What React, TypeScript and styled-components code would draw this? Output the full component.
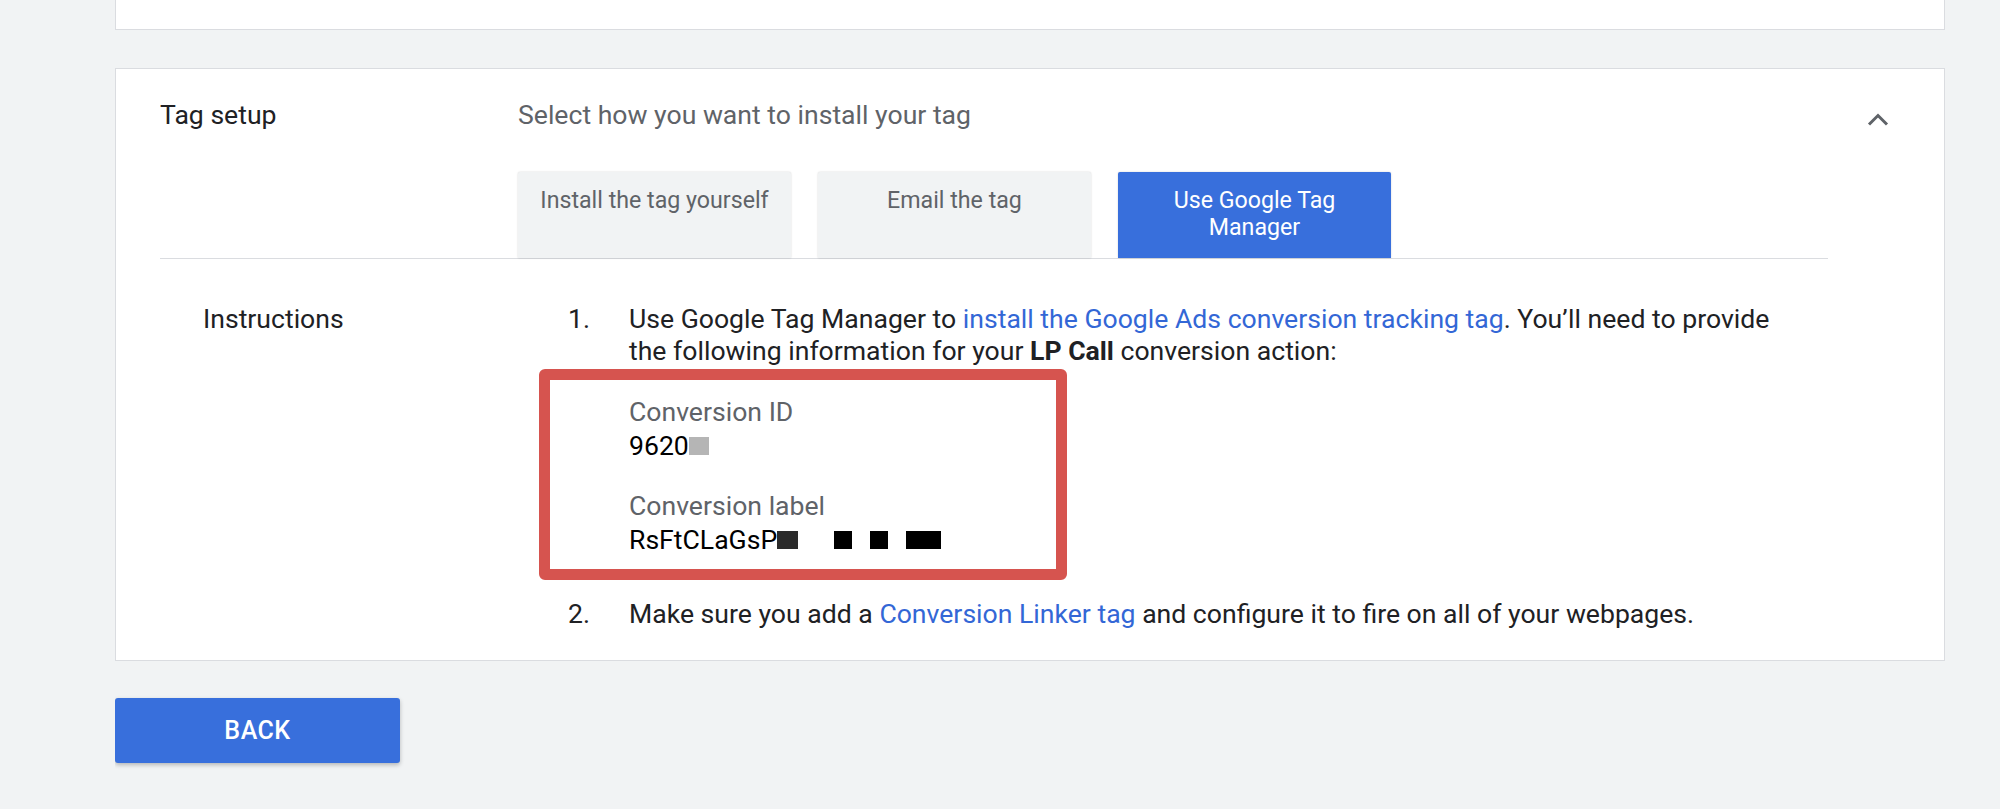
import { FC } from 'react';
import styled, { createGlobalStyle } from 'styled-components';

const GlobalStyle = createGlobalStyle`
  html, body {
    margin: 0;
    padding: 0;
    background: #f1f3f4;
    font-family: Roboto, 'Liberation Sans', Arial, sans-serif;
    color: #202124;
  }
`;

const Page = styled.div`
  width: 1830px;
  margin-left: 115px;
  height: 809px;
  overflow: hidden;
`;

const TopCard = styled.div`
  height: 30px;
  margin-top: -1px;
  background: #fff;
  border: 1px solid #dadce0;
  border-top: none;
`;

const Card = styled.section`
  display: flex;
  margin-top: 38px;
  background: #fff;
  border: 1px solid #dadce0;
  padding: 0 55px 30px 44px;
`;

const Main = styled.div`
  flex: 1;
`;

const ChevronCol = styled.div`
  width: 61px;
  display: flex;
  justify-content: flex-end;
  padding-top: 43px;
`;

const Header = styled.div`
  display: grid;
  grid-template-columns: 358px 1fr;
  padding-top: 30px;
  border-bottom: 1px solid #dadce0;
`;

const SectionTitle = styled.div`
  font-size: 26.6px;
  line-height: 32px;
  color: #202124;
`;

const Prompt = styled.div`
  font-size: 26.6px;
  line-height: 32px;
  color: #5f6368;
`;

const Tabs = styled.div`
  display: flex;
  gap: 27px;
  margin-top: 41px;
`;

const Tab = styled.button<{ $active?: boolean }>`
  width: 273px;
  height: 86px;
  box-sizing: border-box;
  padding: 15px 20px 0;
  border: none;
  border-radius: 2px 2px 0 0;
  background: ${({ $active }) => ($active ? '#386fdc' : '#f1f3f4')};
  color: ${({ $active }) => ($active ? '#fff' : '#5f6368')};
  box-shadow: 0 0 2px rgba(0, 0, 0, 0.18);
  font-family: inherit;
  font-size: 23.2px;
  line-height: 27px;
  text-align: center;
  display: flex;
  justify-content: center;
  align-items: flex-start;
  cursor: pointer;
`;

const Instructions = styled.div`
  display: grid;
  grid-template-columns: 358px 1fr;
  padding-top: 44px;
`;

const SubTitle = styled(SectionTitle)`
  padding-left: 43px;
`;

const Steps = styled.ol`
  list-style: none;
  margin: 0;
  padding: 0 0 0 50px;
`;

const Step = styled.li`
  display: flex;
  font-size: 26.6px;
  line-height: 32px;
  & + & {
    margin-top: 18px;
  }
`;

const StepNum = styled.span`
  width: 61px;
  flex: none;
`;

const StepBody = styled.div`
  max-width: 1175px;
`;

const Link = styled.a`
  color: #3367d6;
  text-decoration: none;
  cursor: pointer;
`;

const Highlight = styled.div`
  width: 427px;
  margin: 2px 0 0 -90px;
  border: 11px solid #d6544f;
  border-radius: 6px;
  padding: 16px 0 13px 79px;
`;

const FieldLabel = styled.div<{ $first?: boolean }>`
  color: #5f6368;
  margin-top: ${({ $first }) => ($first ? 0 : 28)}px;
`;

const FieldValue = styled.div`
  margin-top: 2px;
  display: flex;
  align-items: center;
  color: #000;
`;

const Redact = styled.span<{ $w: number; $color: string; $gap?: number }>`
  display: inline-block;
  width: ${({ $w }) => $w}px;
  height: 18px;
  margin-left: ${({ $gap }) => $gap ?? 0}px;
  background: ${({ $color }) => $color};
`;

const BackButton = styled.button`
  margin-top: 37px;
  width: 285px;
  height: 65px;
  border: none;
  border-radius: 3px;
  background: #386fdc;
  color: #fff;
  font-family: inherit;
  font-size: 25px;
  font-weight: 500;
  letter-spacing: 0.5px;
  box-shadow: 0 2px 4px rgba(0, 0, 0, 0.25);
  cursor: pointer;
`;

const ChevronUp: FC = () => (
  <svg width="22" height="14" viewBox="0 0 22 14" fill="none">
    <path d="M2 12.5 L11 3.5 L20 12.5" stroke="#5f6368" strokeWidth="3" />
  </svg>
);

const App: FC = () => (
  <>
    <GlobalStyle />
    <Page>
      <TopCard />
      <Card>
        <Main>
          <Header>
            <SectionTitle>Tag setup</SectionTitle>
            <div>
              <Prompt>Select how you want to install your tag</Prompt>
              <Tabs>
                <Tab>Install the tag yourself</Tab>
                <Tab>Email the tag</Tab>
                <Tab $active>Use Google Tag Manager</Tab>
              </Tabs>
            </div>
          </Header>
          <Instructions>
            <SubTitle>Instructions</SubTitle>
            <Steps>
              <Step>
                <StepNum>1.</StepNum>
                <StepBody>
                  Use Google Tag Manager to{' '}
                  <Link>install the Google Ads conversion tracking tag</Link>. You’ll need to
                  provide the following information for your <b>LP Call</b> conversion action:
                  <Highlight>
                    <FieldLabel $first>Conversion ID</FieldLabel>
                    <FieldValue>
                      9620
                      <Redact $w={20} $color="#b5b5b5" />
                    </FieldValue>
                    <FieldLabel>Conversion label</FieldLabel>
                    <FieldValue>
                      RsFtCLaGsP
                      <Redact $w={21} $color="#2b2b2b" />
                      <Redact $w={18} $color="#000" $gap={36} />
                      <Redact $w={18} $color="#000" $gap={18} />
                      <Redact $w={35} $color="#000" $gap={18} />
                    </FieldValue>
                  </Highlight>
                </StepBody>
              </Step>
              <Step>
                <StepNum>2.</StepNum>
                <StepBody>
                  Make sure you add a <Link>Conversion Linker tag</Link> and configure it to fire
                  on all of your webpages.
                </StepBody>
              </Step>
            </Steps>
          </Instructions>
        </Main>
        <ChevronCol>
          <ChevronUp />
        </ChevronCol>
      </Card>
      <BackButton>BACK</BackButton>
    </Page>
  </>
);

export default App;
